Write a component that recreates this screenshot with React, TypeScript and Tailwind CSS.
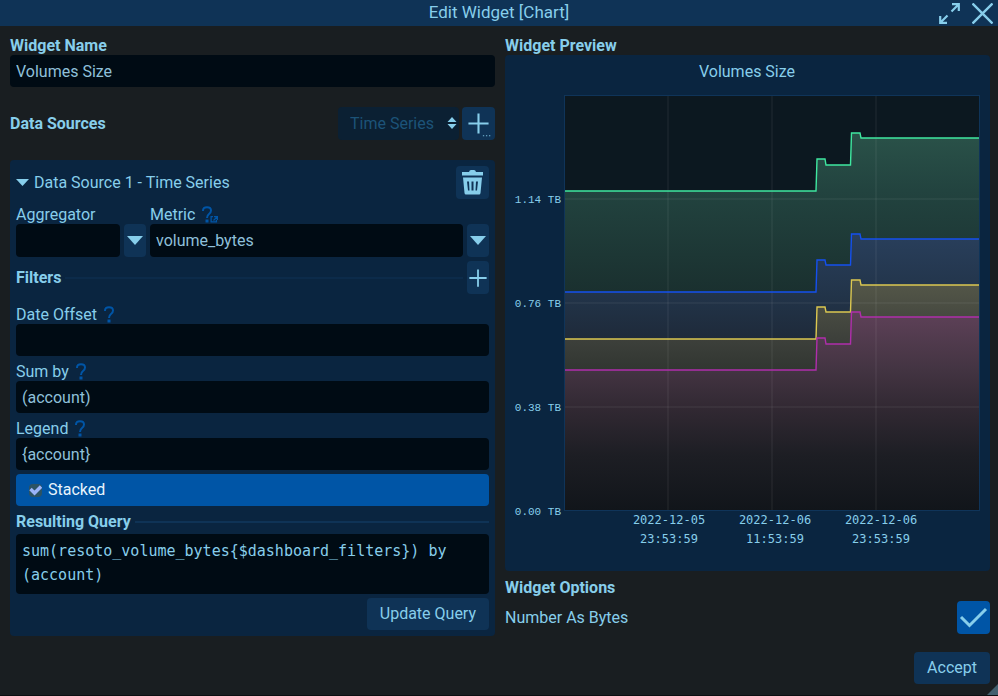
import { useState } from "react";
import type { ReactNode } from "react";

const iconButton =
  "flex h-[33px] shrink-0 items-center justify-center rounded bg-[#0f3356] text-[#87ceeb]";
const textBox =
  "block w-full min-w-0 rounded bg-[#000b14] px-[6px] text-base text-[#8fc0da] outline-none";
const heading = "flex h-[21px] items-center pt-[2px] font-bold";

function HelpIcon({ external = false }: { external?: boolean }) {
  return (
    <svg
      width={external ? 16 : 10}
      height="17"
      viewBox={external ? "0 0 16 17" : "0 0 10 17"}
      fill="none"
      stroke="#0055a6"
      strokeWidth="2"
      aria-hidden="true"
    >
      <path d="M1 5V4.500Q1 1.200 5 1.200T9 4.500Q9 6.500 7 8Q5 9.500 5 12" />
      <path d="M5 13.500v3" strokeWidth="3" />
      {external && (
        <path d="M11 10.600H9.100V15.900H14.400V14M12 10.600H15.400V14M15 11L11.500 14.500" strokeWidth="1.300" />
      )}
    </svg>
  );
}

function PlusIcon({ size, more = false }: { size: number; more?: boolean }) {
  return (
    <svg width={size} height={size} viewBox="0 0 24 24" fill="none" stroke="currentColor" strokeWidth="2.400" overflow="visible" aria-hidden="true">
      <path d="M12 0.500v23M0.500 12h23" />
      {more && <path d="M17 26h9" strokeWidth="1" strokeDasharray="1.500 2" />}
    </svg>
  );
}

function CaretIcon({ width, height }: { width: number; height: number }) {
  return (
    <svg width={width} height={height} viewBox="0 0 16 9" preserveAspectRatio="none" aria-hidden="true">
      <path d="M0 0H16L8 9Z" fill="#87ceeb" />
    </svg>
  );
}

function TrashIcon() {
  return (
    <svg width="21" height="25" viewBox="0 0 21 25" aria-hidden="true">
      <path
        fill="#87ceeb"
        fillRule="evenodd"
        d="M0 2H7Q7.500 0 9 0H12Q13.500 0 14 2H21V5.500H0ZM1 7.500H20L18.500 23Q18.300 24.500 17 24.500H4Q2.700 24.500 2.500 23ZM5 11.500L6 20.500H7.500L7 11.500ZM9.500 11.500V20.500H11.500V11.500ZM14 11.500L13.500 20.500H15L16 11.500Z"
      />
    </svg>
  );
}

function FieldLabel({ htmlFor, help, children }: { htmlFor: string; help?: ReactNode; children: ReactNode }) {
  return (
    <label htmlFor={htmlFor} className="flex h-[21px] items-center gap-[7px] pt-[2px]">
      {children}
      {help}
    </label>
  );
}

function Field({ id, label, value }: { id: string; label: string; value: string }) {
  return (
    <div>
      <FieldLabel htmlFor={id} help={<HelpIcon />}>
        {label}
      </FieldLabel>
      <input id={id} type="text" defaultValue={value} className={`${textBox} h-8`} />
    </div>
  );
}

const series = [
  {
    name: "green",
    color: "#3fe8a0",
    fill: [[78, "#2a5249"], [136, "#22433f"], [237, "#1a302f"], [456, "#11151a"]],
    y: [136, 104, 110, 78, 83],
  },
  {
    name: "blue",
    color: "#1450f0",
    fill: [[179, "#293f5c"], [240, "#223449"], [284, "#1e2a3a"], [456, "#11151a"]],
    y: [237, 205, 210, 179, 184],
  },
  {
    name: "yellow",
    color: "#dcc850",
    fill: [[225, "#555849"], [284, "#3d403b"], [315, "#313631"], [456, "#11151a"]],
    y: [284, 252, 257, 225, 230],
  },
  {
    name: "magenta",
    color: "#b02eac",
    fill: [[257, "#5e4158"], [315, "#433442"], [352, "#322933"], [400, "#1d1e24"], [456, "#11151a"]],
    y: [315, 283, 289, 257, 262],
  },
];

const xTicks = [
  { grid: 163, label: 164, date: "2022-12-05", time: "23:53:59" },
  { grid: 267, label: 270, date: "2022-12-06", time: "11:53:59" },
  { grid: 371, label: 376, date: "2022-12-06", time: "23:53:59" },
];

const yTicks = [
  { y: 144, label: "1.14 TB" },
  { y: 248, label: "0.76 TB" },
  { y: 352, label: "0.38 TB" },
  { y: 456, label: "0.00 TB" },
];

const plotTop = 40;
const plotBottom = 456;

function steps(y: number[]) {
  return `M60 ${y[0]}H311L312 ${y[1]}H320L321 ${y[2]}H345.500L346.500 ${y[3]}H355L356 ${y[4]}H474`;
}

function VolumesChart() {
  return (
    <svg viewBox="0 0 485 516" className="block h-auto w-full rounded bg-[#0a2540]" role="img" aria-label="Volumes Size">
      <defs>
        {series.map((s) => (
          <linearGradient key={s.name} id={s.name} gradientUnits="userSpaceOnUse" x1="0" x2="0" y1={plotTop} y2={plotBottom}>
            {s.fill.map(([y, color]) => (
              <stop key={y} offset={(Number(y) - plotTop) / (plotBottom - plotTop)} stopColor={String(color)} />
            ))}
          </linearGradient>
        ))}
      </defs>
      <text x="242" y="22" textAnchor="middle" fill="#87ceeb" className="text-base">
        Volumes Size
      </text>
      <rect x="59.500" y="40.500" width="415" height="415" fill="#0c1820" stroke="#0f3459" />
      {series.map((s) => (
        <path key={s.name} d={`${steps(s.y)}V455H60Z`} fill={`url(#${s.name})`} />
      ))}
      <g stroke="#ffffff" strokeOpacity="0.045" strokeWidth="2">
        {xTicks.map((t) => (
          <path key={t.grid} d={`M${t.grid} 41V455`} />
        ))}
        {yTicks.slice(0, 3).map((t) => (
          <path key={t.y} d={`M60 ${t.y}H474`} />
        ))}
      </g>
      {series.map((s) => (
        <path key={s.name} d={steps(s.y)} fill="none" stroke={s.color} strokeWidth="1.400" />
      ))}
      <g fill="#87ceeb" className="font-['Liberation_Mono',monospace] text-[12px]">
        {yTicks.map((t) => (
          <text key={t.y} x="56" y={t.y + 4} textAnchor="end" className="text-[11px]">
            {t.label}
          </text>
        ))}
        {xTicks.map((t) => (
          <g key={t.grid} textAnchor="middle" className="font-['DejaVu_Sans_Mono',monospace]">
            <text x={t.label} y="469">{t.date}</text>
            <text x={t.label} y="488">{t.time}</text>
          </g>
        ))}
      </g>
    </svg>
  );
}

export default function App() {
  const [stacked, setStacked] = useState(true);
  const [asBytes, setAsBytes] = useState(true);

  return (
    <div className="relative flex min-h-screen flex-col border-b border-[#0c0f12] bg-[#191e21] font-[Roboto,sans-serif] text-base text-[#87ceeb]">
      <header className="grid h-[26px] grid-cols-[1fr_auto_1fr] items-center bg-[#0f3356]">
        <h1 className="col-start-2 text-[17px]">Edit Widget [Chart]</h1>
        <div className="flex items-center justify-end gap-3 pr-[5px]">
          <button type="button" aria-label="Maximize">
            <svg width="21" height="21" viewBox="0 0 21 21" fill="none" stroke="currentColor" strokeWidth="2.200" aria-hidden="true">
              <path d="M13 1.200H19.800V8M19.500 1.500L12.500 8.500M1.200 13V19.800H8M1.500 19.500L8.500 12.500" />
            </svg>
          </button>
          <button type="button" aria-label="Close">
            <svg width="21" height="21" viewBox="0 0 21 21" fill="none" stroke="currentColor" strokeWidth="2.400" aria-hidden="true">
              <path d="M0.500 0.500L20.500 20.500M20.500 0.500L0.500 20.500" />
            </svg>
          </button>
        </div>
      </header>

      <main className="grid grid-cols-2 items-start gap-[10px] pt-2 pr-2 pl-[10px]">
        <div>
          <label htmlFor="widget-name" className={heading}>
            Widget Name
          </label>
          <input id="widget-name" type="text" defaultValue="Volumes Size" className={`${textBox} h-8`} />

          <div className="mt-5 flex items-center gap-[3px]">
            <label htmlFor="source-type" className="flex-1 font-bold">
              Data Sources
            </label>
            <div className="relative w-[121px]">
              <select
                id="source-type"
                className="block h-[33px] w-full appearance-none rounded bg-[#0b2033] pr-6 pl-3 text-base text-[#1c5378]"
              >
                <option>Time Series</option>
              </select>
              <svg width="10" height="12" viewBox="0 0 10 12" className="pointer-events-none absolute top-[10px] right-[2px]" aria-hidden="true">
                <path d="M0.500 5L5 0L9.500 5ZM0.500 7L5 12L9.500 7Z" fill="#87ceeb" />
              </svg>
            </div>
            <button type="button" aria-label="Add data source" className={`${iconButton} w-[33px]`}>
              <PlusIcon size={21} more />
            </button>
          </div>

          <section className="mt-5 flex flex-col gap-1 rounded bg-[#0a2540] p-[6px]">
            <div className="flex items-center justify-between">
              <button type="button" className="flex items-center gap-[5px]">
                <CaretIcon width={13} height={7} />
                Data Source 1 - Time Series
              </button>
              <button type="button" aria-label="Delete data source" className={`${iconButton} w-[33px]`}>
                <TrashIcon />
              </button>
            </div>

            <div className="flex items-end gap-1">
              <div className="w-[104px]">
                <FieldLabel htmlFor="aggregator">Aggregator</FieldLabel>
                <input id="aggregator" type="text" className={`${textBox} h-[33px]`} />
              </div>
              <button type="button" aria-label="Choose aggregator" className={`${iconButton} w-[22px]`}>
                <CaretIcon width={16} height={9} />
              </button>
              <div className="min-w-0 flex-1">
                <FieldLabel htmlFor="metric" help={<HelpIcon external />}>
                  Metric
                </FieldLabel>
                <input id="metric" type="text" defaultValue="volume_bytes" className={`${textBox} h-[33px]`} />
              </div>
              <button type="button" aria-label="Choose metric" className={`${iconButton} w-[22px]`}>
                <CaretIcon width={16} height={9} />
              </button>
            </div>

            <div className="mb-[5px] flex items-center gap-1">
              <h2 className="font-bold">Filters</h2>
              <div className="h-[2px] flex-1 bg-[#0c2b4a]" />
              <button type="button" aria-label="Add filter" className={`${iconButton} w-[22px]`}>
                <PlusIcon size={18} />
              </button>
            </div>

            <Field id="date-offset" label="Date Offset" value="" />
            <Field id="sum-by" label="Sum by" value="(account)" />
            <Field id="legend" label="Legend" value="{account}" />

            <label className="flex h-8 items-center gap-[6px] rounded bg-[#0055a6] pl-[13px] text-[#e8f4fc]">
              <span className="relative size-[13px]">
                <input
                  type="checkbox"
                  checked={stacked}
                  onChange={(e) => setStacked(e.target.checked)}
                  className="block size-[13px] appearance-none rounded-sm bg-[#2c5364]"
                />
                {stacked && (
                  <svg width="13" height="13" viewBox="0 0 13 13" className="pointer-events-none absolute inset-0" aria-hidden="true">
                    <path d="M1.500 5L5.500 9L12 2.500" fill="none" stroke="#9ab4fa" strokeWidth="3.400" />
                  </svg>
                )}
              </span>
              Stacked
            </label>

            <div>
              <div className="flex h-6 items-center gap-1">
                <label htmlFor="query" className="font-bold">
                  Resulting Query
                </label>
                <div className="h-[2px] flex-1 bg-[#0f3356]" />
              </div>
              <textarea
                id="query"
                readOnly
                value={"sum(resoto_volume_bytes{$dashboard_filters}) by (account)"}
                className="block h-[60px] w-full resize-none overflow-hidden rounded bg-[#000b14] px-[6px] py-[5px] font-['DejaVu_Sans_Mono',monospace] text-[15px] leading-6 outline-none"
              />
            </div>

            <button type="button" className="h-8 self-end rounded bg-[#0f3356] px-[13px]">
              Update Query
            </button>
          </section>
        </div>

        <div>
          <h2 className={heading}>Widget Preview</h2>
          <VolumesChart />
          <h2 className={`${heading} mt-[5px]`}>Widget Options</h2>
          <label className="mt-1 flex items-center justify-between">
            Number As Bytes
            <span className="relative size-[33px]">
              <input
                type="checkbox"
                checked={asBytes}
                onChange={(e) => setAsBytes(e.target.checked)}
                className="block size-[33px] appearance-none rounded bg-[#0f3356] checked:bg-[#0055a6]"
              />
              {asBytes && (
                <svg width="33" height="33" viewBox="0 0 33 33" className="pointer-events-none absolute inset-0" aria-hidden="true">
                  <path d="M4 16L12.500 24.500L29 8" fill="none" stroke="#87ceeb" strokeWidth="3" />
                </svg>
              )}
            </span>
          </label>
        </div>
      </main>

      <footer className="mt-4 flex justify-end pr-2">
        <button type="button" className="h-8 rounded bg-[#0f3356] px-[13px]">
          Accept
        </button>
      </footer>
      <svg width="11" height="11" viewBox="0 0 11 11" className="absolute right-0 bottom-0" aria-hidden="true">
        <path d="M11 0V11H0Z" fill="#42606f" />
      </svg>
    </div>
  );
}
